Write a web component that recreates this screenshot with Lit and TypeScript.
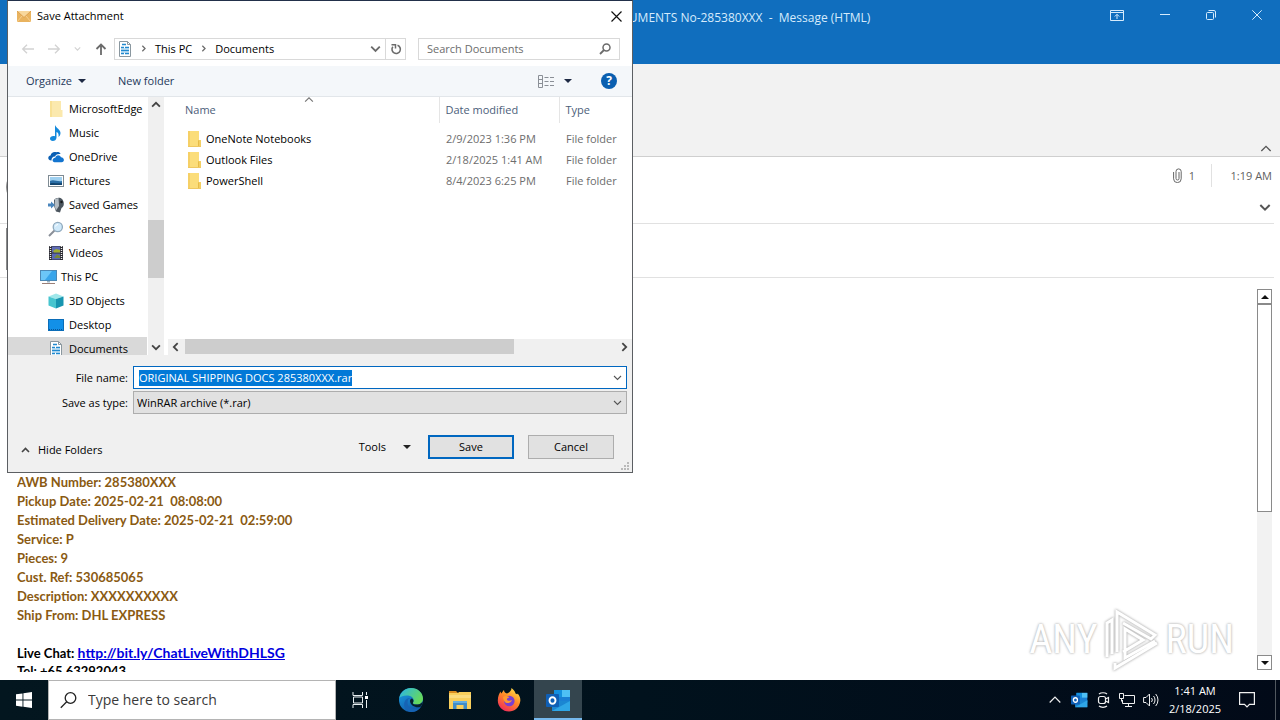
import { LitElement, html, svg, css, type TemplateResult } from "lit";
import { customElement, query } from "lit/decorators.js";
import { classMap } from "lit/directives/class-map.js";

/* ---------- icons ---------- */

const icon = (w: number, h: number, body: unknown, box = `0 0 ${w} ${h}`) =>
  html`<svg width=${w} height=${h} viewBox=${box} fill="none" aria-hidden="true">${body}</svg>`;

const chevron = (dir: "up" | "down" | "left" | "right", color = "#444", size = 8, stroke = 1.6) => {
  const d = {
    up: "M1 6 L4.5 2.5 L8 6",
    down: "M1 3 L4.5 6.5 L8 3",
    left: "M6 1 L2.5 4.5 L6 8",
    right: "M3 1 L6.5 4.5 L3 8",
  }[dir];
  return icon(size, size, svg`<path d=${d} stroke=${color} stroke-width=${stroke}/>`, "0 0 9 9");
};

const triangle = (color = "#1e2a44") => icon(8, 4, svg`<path d="M0 0H8L4 4Z" fill=${color}/>`);

const pageLines = svg`
  <path d="M2.500 .5H10.500L13.500 3.500V15.500H2.500Z" fill="#fff" stroke="#8a979f"/>
  <path d="M10.500 .5V3.500H13.500" stroke="#8a979f"/>
  <path d="M5 3.500H9M4 6.500H7M8 6.500H12M4 9.500H12M4 12.500H7M8 12.500H12" stroke="#2089cf" stroke-width="1.500"/>
  <path d="M4 8H12M4 11H12" stroke="#8cc6ea"/>`;

const art: Record<string, TemplateResult> = {
  mail: icon(14, 11, svg`<rect width="14" height="11" fill="#e9b35f"/><path d="M0 0H14L7 6.500Z" fill="#f8d79c"/><path d="M0 0L7 6.500L14 0" stroke="#dca050"/><path d="M0 11L5 5M14 11L9 5" stroke="#f6cf91"/>`),
  document: icon(16, 16, pageLines),
  folderPale: icon(16, 16, svg`<path d="M2 0H13V9H14.500V16H2Z" fill="#fbe9ae"/><path d="M2 0H4V16H2Z" fill="#f8e196"/>`),
  folder: icon(16, 16, svg`<path d="M2 0H13V16H2Z" fill="#fbdd7a"/><path d="M2 0H4V16H2Z" fill="#f6d066"/><path d="M12 9H15V16H12Z" fill="#f3cf63"/><path d="M12.500 9.500V15.500" stroke="#e6bb48"/><path d="M2 15.500H15" stroke="#efc860"/>`),
  music: icon(16, 16, svg`<path d="M7 0C8 3 12.5 4.500 12.5 8C12.500 10 11.500 11 10.500 12C11 9 10 7.500 8.500 7V12.500C8.500 15 6.500 16 4.800 16C3 16 2 15 2 13.500C2 11.500 4.500 10.500 7 11.200Z" fill="#1489dc"/>`),
  onedrive: icon(16, 16, svg`<path d="M3.500 11.500C1 11.500 0 10 .3 8.500C.6 7 2 6.500 2.600 6.500C3 3.500 6 2.300 8.300 3.300C9.500 2.600 12 3 12.500 5C9 4.500 7.500 6 7 7.500C4.500 7.500 3.300 9.500 3.500 11.500Z" fill="#0a5fb4"/><path d="M6.500 13.300C4 13.300 3.600 9.300 7.300 8.800C7.800 5.500 12 5.200 13 8.300C16.500 8.300 17 13.300 13.600 13.300Z" fill="#1374cf"/>`),
  pictures: icon(16, 16, svg`<rect x=".5" y="2.500" width="15" height="11" fill="#fff" stroke="#7f8b93"/><rect x="2" y="4" width="12" height="8" fill="#9fd0f0"/><path d="M2 8C6 6 9 9 14 8V12H2Z" fill="#2a6ea6"/><path d="M2 10.500C6 9 9 11 14 10V12H2Z" fill="#13456f"/>`),
  games: icon(16, 16, svg`<path d="M6 3C8 .5 12 0 14 2C16.500 4.500 16.500 10 13.500 11L12 15.500L8 14.500L6 9Z" fill="#4b555e"/><path d="M7 2L10.500 1L11 9L8 13.500L6.500 9Z" fill="#b4bdc4"/><path d="M0 6.500H3V4.500L7 8L3 11.500V9.500H0Z" fill="#4a86bd"/><circle cx="13.500" cy="5" r="1.200" fill="#16191c"/>`),
  search: icon(16, 16, svg`<path d="M6.500 9.500L1 15" stroke="#8a8f98" stroke-width="2"/><circle cx="9.800" cy="6" r="4.600" fill="#cfe9fa" stroke="#8fa9bd" stroke-width="1.300"/><path d="M7.500 5.500A2.500 2.500 0 0 1 10 3.500" stroke="#fff"/>`),
  videos: icon(16, 16, svg`<rect x="1" y="1" width="14" height="14" fill="#2c2c34"/><path d="M2.500 1V15M13.500 1V15" stroke="#eee" stroke-width="1.400" stroke-dasharray="1 1"/><rect x="4" y="1.500" width="8" height="6" fill="#5f6cb5"/><rect x="4" y="8.500" width="8" height="6" fill="#5a68b8"/><path d="M5 6L8 4L12 5V7.500H6Z" fill="#9fae2f"/><path d="M6 13L9 9.500L12 11V13Z" fill="#77893a"/>`),
  pc: icon(17, 16, svg`<rect x=".5" y="1.500" width="16" height="10" fill="#39a5ea" stroke="#4c88b5"/><path d="M1 2H12L5 11H1Z" fill="#6cc6f7"/><path d="M7 12H10V13.500H7Z" fill="#9db3c2"/><path d="M2 14.500H15" stroke="#9a7f78"/>`),
  cube: icon(16, 16, svg`<path d="M8 .5L15.500 3.500L8 6L.5 3.500Z" fill="#9fe7ea"/><path d="M.5 3.500L8 6V15.500L.5 12.500Z" fill="#47c5cf"/><path d="M8 6L15.500 3.500V12.500L8 15.500Z" fill="#1795b0"/>`),
  desktop: icon(16, 16, svg`<rect x=".5" y="2.500" width="15" height="11" fill="#1290e8" stroke="#0b6db8"/><path d="M1 12.500H15" stroke="#0a5597" stroke-dasharray="1 1"/>`),
  back: icon(13, 10, svg`<path d="M1.500 5H13M6 .7L1.700 5L6 9.300" stroke="#d2d2d2" stroke-width="1.300"/>`),
  forward: icon(13, 10, svg`<path d="M0 5H11.500M7 .7L11.300 5L7 9.300" stroke="#d2d2d2" stroke-width="1.300"/>`),
  up: icon(12, 12, svg`<path d="M6 1.500V12M1.500 6L6 1.500L10.500 6" stroke="#6b6b6b" stroke-width="1.800"/>`),
  refresh: icon(12, 12, svg`<path d="M7.500 2.300A4.200 4.200 0 1 1 2.800 3.800" stroke="#6b6b6b" stroke-width="1.600"/><path d="M1.500 1.700H5.500V5.500" stroke="#6b6b6b" stroke-width="1.500"/>`),
  glass: icon(12, 12, svg`<circle cx="7.500" cy="4.500" r="3.500" stroke="#6b6b6b" stroke-width="1.500"/><path d="M5 7L1 11" stroke="#6b6b6b" stroke-width="1.800"/>`),
  views: icon(17, 13, svg`<path d="M.5 .5H4.500V12.500H.5ZM.5 4.500H4.500M.5 8.500H4.500" stroke="#8a8f96"/><path d="M6.500 2.500H10.500M12 2.500H16M6.500 6.500H10.500M12 6.500H16M6.500 10.500H10.500M12 10.500H16" stroke="#8a8f96"/>`),
  close: icon(11, 11, svg`<path d="M.5 .5L10.500 10.500M10.500 .5L.5 10.500" stroke="#111" stroke-width="1.200"/>`),
  grip: icon(9, 9, svg`<path d="M6 1H8M3 4H5M6 4H8M0 7H2M3 7H5M6 7H8" stroke="#b9b9b9" stroke-width="2"/>`),
  winRibbon: icon(14, 11, svg`<path d="M.5 .5H13.500V10.500H.5ZM.5 2.500H13.500M7 9V4.500M4.800 6.500L7 4.300L9.200 6.500" stroke="#d6ebfc"/>`),
  winMin: icon(10, 10, svg`<path d="M0 4.500H10" stroke="#d6ebfc"/>`),
  winMax: icon(10, 10, svg`<rect x=".5" y="2.500" width="7" height="7" rx="1" stroke="#d6ebfc"/><path d="M2.500 .5H8A1.500 1.500 0 0 1 9.500 2V7.500" stroke="#d6ebfc"/>`),
  winClose: icon(10, 10, svg`<path d="M.3 .3L9.700 9.700M9.700 .3L.3 9.700" stroke="#d6ebfc"/>`),
  clip: icon(9, 15, svg`<path d="M6 4V10.500A1.500 1.500 0 0 1 3 10.500V3.500" stroke="#666"/><path d="M.6 4V10.800A3.800 3.800 0 0 0 8.200 10.800V3.500A2.600 2.600 0 0 0 3 3.500" stroke="#666"/>`),
  windows: icon(16, 16, svg`<path d="M0 2.300L6.500 1.400V7.600H0ZM7.400 1.300L16 0V7.600H7.400ZM0 8.500H6.500V14.700L0 13.800ZM7.400 8.500H16V16L7.400 14.800Z" fill="#fff"/>`),
  taskSearch: icon(17, 17, svg`<circle cx="10.500" cy="6" r="5.300" stroke="#222" stroke-width="1.300"/><path d="M6.700 9.800L.8 15.700" stroke="#222" stroke-width="1.300"/>`),
  taskView: icon(17, 16, svg`<path d="M1 0V3.500H10.500V0M1 16V12.500H10.500V16M1.500 5H10.500V11H1.500Z" stroke="#e8eef0"/><path d="M14.500 0V3M14.500 8V16" stroke="#e8eef0"/><rect x="13" y="4" width="3" height="3" fill="#fff"/>`),
  edge: icon(24, 24, svg`
    <defs>
      <linearGradient id="e1" x1="0" y1="0" x2="1" y2=".5"><stop offset="0" stop-color="#29b5ea"/><stop offset="1" stop-color="#66d95c"/></linearGradient>
      <linearGradient id="e2" x1="0" y1="0" x2=".6" y2="1"><stop offset="0" stop-color="#1aa3e6"/><stop offset="1" stop-color="#1158a8"/></linearGradient>
    </defs>
    <circle cx="12" cy="12" r="12" fill="url(#e2)"/>
    <path d="M.3 10C1.500 4 6.500 0 12 0C19 0 24 5 24 10.500C24 14.500 21 16.500 18 16.500C15 16.500 13.500 15.500 14 14.500C15.500 12.500 14.500 9 11 8C7 6.800 2 8 .3 10Z" fill="url(#e1)"/>
    <path d="M9 12C7 18 12 21.500 17 20.800C19 20.600 21 19.700 22 18.700C20 22 16 24 12.500 24C7 24 4 18.500 5.500 14C6.500 11 9.500 9.500 11.500 10C10 10.500 9.300 11 9 12Z" fill="#1663b3"/>
    <path d="M14 14.500C13 16 15.500 16.800 18.500 16.500C21 16.300 23 15 23.700 13.500C23.500 16.500 22.500 18 21 19C17 20 11.500 18 11 13C11 11.500 12 10.500 13 10.500C14.800 11.500 14.800 13.300 14 14.500Z" fill="#06212d"/>`),
  explorer: icon(22, 18, svg`<path d="M0 0H7L9 2H0Z" fill="#d98c1f"/><path d="M0 2H9L10 1H22V18H0Z" fill="#f8cf5c"/><path d="M0 4H22V7H0Z" fill="#fbdc7f"/><path d="M4 18V10H18V18H14.500V14H7.500V18Z" fill="#3f8dc9"/><path d="M4 10H18V12H4Z" fill="#62aee2"/>`),
  firefox: icon(24, 24, svg`
    <defs><linearGradient id="f1" x1=".8" y1="0" x2=".2" y2="1"><stop offset="0" stop-color="#ffe14a"/><stop offset=".45" stop-color="#ff8a26"/><stop offset="1" stop-color="#f0245e"/></linearGradient></defs>
    <path d="M14.500 0C17 2 18 3.500 18.500 5.500C20 6 20.500 7 20.700 5.500C23 8 23.500 11 23.300 13C22.500 19.500 17.500 23.500 12 23.500C5.500 23.500 .8 18.500 .8 12.500C.8 8 2.500 5 3.500 3.500C3.800 4.500 4 5 4.500 5.500C5 4 6.500 2.500 7 2C7 4 8 5 10 5.500C12 4.500 14.500 3 14.500 0Z" fill="url(#f1)"/>
    <circle cx="12.300" cy="13" r="5.300" fill="#7a3fd0"/>
    <path d="M6 9C8 7.500 11 8 12.500 9.500C11 9.500 9.500 10.500 10 12C11 13.500 14 12.500 15 12C14 15.500 9.500 16 7.500 13.500C6.500 12 6 10.500 6 9Z" fill="#ff9a2e"/>`),
  outlook: icon(25, 23, svg`<rect x="8" y="1" width="16" height="14" fill="#1a7fd4"/><rect x="16" y="1" width="8" height="7" fill="#4fc0f5"/><rect x="8" y="1" width="8" height="7" fill="#1490df"/><path d="M6 12H24V22H6Z" fill="#1b86d2"/><path d="M6 22L24 12V22Z" fill="#2fa6e6"/><rect y="5" width="13" height="13" rx="1" fill="#0f5fb5"/><ellipse cx="6.500" cy="11.500" rx="3" ry="3.300" stroke="#fff" stroke-width="1.900"/>`),
  trayUp: icon(12, 8, svg`<path d="M.7 6.500L6 1.200L11.300 6.500" stroke="#f0f0f0" stroke-width="1.200"/>`),
  meet: icon(13, 16, svg`<rect x="1.500" y="4.500" width="7" height="7" rx="2" stroke="#f0f0f0" stroke-width="1.200"/><path d="M8.500 7L11.500 5.500V10.500L8.500 9M2 2C4 .3 8 .3 10 2M2 14C4 15.700 8 15.700 10 14" stroke="#f0f0f0" stroke-width="1.200"/>`),
  network: icon(16, 14, svg`<path d="M5.500 2.500H15.500V10.500H3.500V7M9.500 10.500V13M6 13.500H13" stroke="#f0f0f0"/><path d="M.5 .5H4.500V5.500H.5ZM2.500 5.500V8.500" stroke="#f0f0f0"/>`),
  volume: icon(17, 14, svg`<path d="M.6 4.500H3L6.500 1V13L3 9.500H.6Z" stroke="#f0f0f0"/><path d="M8.500 5A3 3 0 0 1 8.500 9M10.500 3A6 6 0 0 1 10.500 11M12.700 1A9 9 0 0 1 12.700 13" stroke="#f0f0f0"/>`),
  notify: icon(16, 17, svg`<path d="M.6 .6H15.400V12.400H10.500L8 15L5.500 12.400H.6Z" stroke="#f0f0f0" stroke-width="1.200"/>`),
};

/* ---------- data ---------- */

const tree = [
  { name: "MicrosoftEdge", art: "folderPale" },
  { name: "Music", art: "music" },
  { name: "OneDrive", art: "onedrive" },
  { name: "Pictures", art: "pictures" },
  { name: "Saved Games", art: "games" },
  { name: "Searches", art: "search" },
  { name: "Videos", art: "videos" },
  { name: "This PC", art: "pc", root: true },
  { name: "3D Objects", art: "cube" },
  { name: "Desktop", art: "desktop" },
  { name: "Documents", art: "document", selected: true },
];

const files = [
  { name: "OneNote Notebooks", date: "2/9/2023 1:36 PM", type: "File folder" },
  { name: "Outlook Files", date: "2/18/2025 1:41 AM", type: "File folder" },
  { name: "PowerShell", date: "8/4/2023 6:25 PM", type: "File folder" },
];

const shipment = [
  "AWB Number: 285380XXX",
  "Pickup Date: 2025-02-21  08:08:00",
  "Estimated Delivery Date: 2025-02-21  02:59:00",
  "Service: P",
  "Pieces: 9",
  "Cust. Ref: 530685065",
  "Description: XXXXXXXXXX",
  "Ship From: DHL EXPRESS",
];

const reset = css`
  * { box-sizing: border-box; }
  svg { display: block; flex: none; }
  button, input, select { font: inherit; color: inherit; margin: 0; }
  button { background: none; border: 0; padding: 0; display: flex; align-items: center; justify-content: center; }
  ul { list-style: none; margin: 0; padding: 0; }
`;

/* ---------- save dialog ---------- */

@customElement("save-dialog")
export class SaveDialog extends LitElement {
  @query("#file-name") private fileName!: HTMLInputElement;

  static styles = [reset, css`
    :host {
      display: flex; flex-direction: column;
      background: #fff; color: #000;
      border: 1px solid #5c5f63; border-top-color: #22304a;
      font: 11px/16px "Open Sans", "Noto Sans", sans-serif;
    }
    .titlebar { display: flex; align-items: center; height: 30px; padding: 0 10px 0 9px; gap: 6px; }
    .titlebar h1 { flex: 1; margin: 0; font: inherit; }
    .nav { display: flex; align-items: center; height: 35px; padding: 0 12px; }
    .arrows { display: flex; align-items: center; justify-content: space-between; width: 94px; padding: 0 7px 0 1px; }
    .address { display: flex; align-items: center; flex: 1; height: 22px; border: 1px solid #d9d9d9; padding-left: 2px; }
    .crumbs { display: flex; align-items: center; flex: 1; gap: 8px; padding-left: 7px; }
    .address .drop { width: 20px; height: 20px; }
    .address .refresh { width: 20px; height: 20px; border-left: 1px solid #d9d9d9; }
    .search { display: flex; align-items: center; width: 202px; height: 22px; margin-left: 12px; padding: 0 8px; border: 1px solid #d9d9d9; }
    .search input { flex: 1; min-width: 0; border: 0; padding: 0; outline: 0; background: none; }
    .search input::placeholder { color: #6d6d6d; opacity: 1; }
    .toolbar { display: flex; align-items: center; height: 31px; padding: 0 15px 0 18px; border-bottom: 1px solid #e2e6ea; background: #f4f7fa; color: #1e395b; }
    .toolbar button { gap: 6px; }
    .toolbar .new { margin-left: 32px; }
    .toolbar .views { margin-left: auto; gap: 9px; }
    .toolbar .help { width: 16px; height: 16px; margin-left: 29px; border-radius: 50%; background: #0a5fb0; color: #fff; font-weight: 700; font-size: 12px; }
    .panes { display: flex; height: 258px; overflow: hidden; }
    .tree { width: 139px; overflow: hidden; }
    .tree li { display: flex; align-items: center; gap: 5px; height: 24px; padding-left: 40px; white-space: nowrap; }
    .tree li.root { padding-left: 32px; gap: 4px; }
    .tree li.selected { background: #d9d9d9; }
    .vbar { display: flex; flex-direction: column; width: 16px; margin-left: 1px; background: #f0f0f0; }
    .vbar button, .hbar button { flex: none; width: 16px; height: 16px; }
    .vbar .thumb { margin-top: 107px; height: 58px; background: #cdcdcd; }
    .vbar .end { margin-top: auto; }
    .list { display: flex; flex-direction: column; flex: 1; min-width: 0; }
    .scroller { position: relative; flex: 1; overflow: hidden; }
    table { width: 100%; border-collapse: collapse; table-layout: fixed; }
    th { height: 26px; padding: 0 0 0 6px; text-align: left; font-weight: 400; color: #4c607a; border-left: 1px solid #e5e5e5; }
    th:first-child { border-left: 0; padding-left: 21px; }
    .c-name { width: 275px; }
    .c-date { width: 120px; }
    tbody::before { content: ""; display: block; height: 5px; }
    td { height: 21px; padding: 0 0 0 7px; color: #6d6d6d; white-space: nowrap; overflow: hidden; }
    td:first-child { padding-left: 22px; color: #000; }
    .cell { display: flex; align-items: center; gap: 4px; }
    .sort { position: absolute; left: 140px; top: -2px; }
    .hbar { display: flex; height: 16px; margin-left: 4px; background: #f0f0f0; }
    .hbar .thumb { width: 71%; height: 15px; background: #cdcdcd; margin-left: 1px; }
    .hbar .end { margin-left: auto; }
    .form { background: #f0f0f0; padding: 11px 5px 0 8px; }
    .fields { display: grid; grid-template-columns: 112px 1fr; column-gap: 5px; row-gap: 2px; align-items: center; }
    .fields label { text-align: right; }
    .combo { position: relative; display: flex; align-items: center; height: 23px; background: #fff; border: 1px solid #0067c0; padding: 0 4px 0 5px; }
    .combo.type { background: #e1e1e1; border-color: #adadad; padding: 0; }
    .combo input { flex: 1; min-width: 0; border: 0; padding: 0; outline: 0; background: none; line-height: 16px; caret-color: transparent; }
    .combo input::selection { background: rgba(0, 120, 215, 0.996); color: #fff; }
    .combo select { appearance: none; width: 100%; height: 100%; border: 0; outline: 0; background: none; padding: 0 3px; }
    .combo .mark { position: absolute; right: 4px; pointer-events: none; }
    .actions { display: flex; align-items: center; height: 24px; margin-top: 21px; padding-right: 13px; }
    .hide { gap: 8px; padding-left: 5px; margin-top: 6px; }
    .tools { gap: 17px; margin-left: auto; margin-right: 17px; }
    .push { width: 86px; height: 24px; border: 1px solid #adadad; background: #e1e1e1; }
    .push.default { border: 2px solid #0067c0; margin-right: 14px; }
    .foot { display: flex; justify-content: flex-end; height: 13px; align-items: flex-end; padding-bottom: 1px; margin-right: -3px; }
  `];

  firstUpdated() {
    this.fileName.focus();
    this.fileName.select();
  }

  render() {
    return html`
      <div class="titlebar">${art.mail}<h1>Save Attachment</h1><button aria-label="Close">${art.close}</button></div>
      <div class="nav">
        <div class="arrows">
          <button aria-label="Back">${art.back}</button>
          <button aria-label="Forward">${art.forward}</button>
          <button aria-label="Recent locations">${chevron("down", "#d2d2d2", 7, 1.5)}</button>
          <button aria-label="Up">${art.up}</button>
        </div>
        <div class="address">
          ${art.document}
          <div class="crumbs">${chevron("right", "#6b6b6b", 7)}<span>This PC</span>${chevron("right", "#6b6b6b", 7)}<span>Documents</span></div>
          <button class="drop" aria-label="Previous locations">${chevron("down", "#6b6b6b", 11, 1.5)}</button>
          <button class="refresh" aria-label="Refresh">${art.refresh}</button>
        </div>
        <div class="search"><input type="text" placeholder="Search Documents" aria-label="Search Documents">${art.glass}</div>
      </div>
      <div class="toolbar">
        <button>Organize ${triangle()}</button>
        <button class="new">New folder</button>
        <button class="views" aria-label="Change your view">${art.views}${triangle()}</button>
        <button class="help" aria-label="Get help">?</button>
      </div>
      <div class="panes">
        <ul class="tree">
          ${tree.map((n) => html`<li class=${classMap({ root: !!n.root, selected: !!n.selected })}>${art[n.art]}<span>${n.name}</span></li>`)}
        </ul>
        <div class="vbar">
          <button aria-label="Scroll up">${chevron("up", "#444", 10)}</button>
          <div class="thumb"></div>
          <button class="end" aria-label="Scroll down">${chevron("down", "#444", 10)}</button>
        </div>
        <div class="list">
          <div class="scroller">
            <span class="sort">${chevron("up", "#777", 10, 1)}</span>
            <table>
              <colgroup><col class="c-name"><col class="c-date"><col></colgroup>
              <thead><tr><th>Name</th><th>Date modified</th><th>Type</th></tr></thead>
              <tbody>
                ${files.map((f) => html`<tr><td><div class="cell">${art.folder}${f.name}</div></td><td>${f.date}</td><td>${f.type}</td></tr>`)}
              </tbody>
            </table>
          </div>
          <div class="hbar">
            <button aria-label="Scroll left">${chevron("left", "#444", 10)}</button>
            <div class="thumb"></div>
            <button class="end" aria-label="Scroll right">${chevron("right", "#444", 10)}</button>
          </div>
        </div>
      </div>
      <div class="form">
        <div class="fields">
          <label for="file-name">File name:</label>
          <div class="combo"><input id="file-name" type="text" value="ORIGINAL SHIPPING DOCS 285380XXX.rar" spellcheck="false">${chevron("down", "#555", 9, 1.1)}</div>
          <label for="file-type">Save as type:</label>
          <div class="combo type"><select id="file-type"><option>WinRAR archive (*.rar)</option></select><span class="mark">${chevron("down", "#555", 9, 1.1)}</span></div>
        </div>
        <div class="actions">
          <button class="hide">${chevron("up", "#444", 9)}Hide Folders</button>
          <button class="tools">Tools ${triangle("#222")}</button>
          <button class="push default">Save</button>
          <button class="push">Cancel</button>
        </div>
        <div class="foot">${art.grip}</div>
      </div>
    `;
  }
}

/* ---------- Outlook message window ---------- */

@customElement("message-window")
export class MessageWindow extends LitElement {
  static styles = [reset, css`
    :host { display: flex; flex-direction: column; background: #fff; font: 11px/16px "Open Sans", "Noto Sans", sans-serif; }
    .titlebar { display: flex; height: 64px; background: #106ebe; color: #d6ebfc; }
    .titlebar h2 { flex: 1; margin: 0; padding-top: 10px; font: inherit; font-size: 12px; text-align: right; white-space: pre; }
    .controls { display: flex; align-items: center; justify-content: flex-end; gap: 36px; width: 32%; height: 30px; padding-right: 18px; }
    .ribbon { display: flex; align-items: flex-end; justify-content: flex-end; height: 93px; padding: 0 8px 1px; background: #f2f2f2; border-bottom: 1px solid #cfcfcf; }
    .head { display: flex; height: 67px; margin-right: 6px; padding-left: 6px; border-bottom: 1px solid #e1e1e1; }
    .avatar { width: 40px; height: 40px; margin-top: 10px; border: 1px solid #8a8a8a; border-radius: 50%; }
    .meta { flex: 1; display: flex; flex-direction: column; align-items: flex-end; gap: 14px; padding-top: 7px; color: #5f5f5f; }
    .info { display: flex; align-items: center; height: 23px; }
    .count { display: flex; align-items: center; gap: 7px; height: 23px; padding-right: 16px; border-right: 1px solid #e1e1e1; }
    .time { width: 60px; text-align: right; margin-right: 2px; }
    .meta button { margin-right: 3px; }
    .files { height: 54px; margin-right: 6px; padding: 4px 6px; border-bottom: 1px solid #e1e1e1; }
    .attachment { width: 200px; height: 42px; border: 1px solid #8a8a8a; }
    .reading { display: flex; flex: 1; min-height: 0; padding: 11px 8px 8px 17px; }
    .mail { flex: 1; overflow: hidden; padding-top: 184px; color: #8a5a12; font: 700 13px/19px Lato, "Open Sans", sans-serif; white-space: pre; }
    .mail p { margin: 0; height: 19px; }
    .mail .dark { color: #000; }
    .mail a { color: #0000e0; font-size: 14px; }
    .mail .first { margin-top: 18px; }
    .bar { display: flex; flex-direction: column; width: 15px; margin-bottom: 2px; background: #f2f2f2; }
    .bar button { width: 15px; height: 15px; border: 1px solid #8a8a8a; background: #fff; }
    .bar .thumb { height: 208px; border: 1px solid #8a8a8a; background: #fff; }
    .bar .end { margin-top: auto; }
  `];

  render() {
    return html`
      <header class="titlebar">
        <h2>DOCUMENTS No-285380XXX  -  Message (HTML)</h2>
        <div class="controls">
          <button aria-label="Ribbon display options">${art.winRibbon}</button>
          <button aria-label="Minimize">${art.winMin}</button>
          <button aria-label="Restore">${art.winMax}</button>
          <button aria-label="Close">${art.winClose}</button>
        </div>
      </header>
      <div class="ribbon"><button aria-label="Collapse the ribbon">${chevron("up", "#555", 12, 1)}</button></div>
      <div class="head">
        <div class="avatar"></div>
        <div class="meta">
          <div class="info"><span class="count">${art.clip}1</span><span class="time">1:19 AM</span></div>
          <button aria-label="Expand header">${chevron("down", "#555", 12, 1.5)}</button>
        </div>
      </div>
      <div class="files"><div class="attachment"></div></div>
      <div class="reading">
        <div class="mail">${shipment.map((line) => html`<p>${line}</p>`)}<p class="dark first">Live Chat: <a href="http://bit.ly/ChatLiveWithDHLSG">http://bit.ly/ChatLiveWithDHLSG</a></p><p class="dark">Tel: +65 63292043</p></div>
        <div class="bar">
          <button aria-label="Scroll up">${icon(8, 4, svg`<path d="M4 0L8 4H0Z" fill="#111"/>`)}</button>
          <div class="thumb"></div>
          <button class="end" aria-label="Scroll down">${triangle("#111")}</button>
        </div>
      </div>
    `;
  }
}

/* ---------- taskbar ---------- */

@customElement("task-bar")
export class TaskBar extends LitElement {
  static styles = [reset, css`
    :host { display: flex; height: 40px; background: linear-gradient(90deg, #03161f, #01121d 50%, #020a18); color: #fff; font: 11px/18px "Open Sans", "Noto Sans", sans-serif; }
    .cell { width: 49px; height: 40px; }
    .view { margin-right: 1px; }
    .start { width: 48px; }
    .search { display: flex; align-items: center; gap: 11px; width: 288px; height: 40px; padding-left: 11px; background: #fff; border: 1px solid #b4b4b4; color: #333; }
    .search input { flex: 1; min-width: 0; border: 0; padding: 0; outline: 0; background: none; font-size: 14px; line-height: 20px; }
    .search input::placeholder { color: #3a3a3a; opacity: 1; }
    .active { width: 48px; margin-left: 1px; background: #34454e; border-bottom: 2px solid #76b9ed; padding-top: 2px; }
    .tray { display: flex; align-items: center; margin-left: auto; }
    .tray .t { width: 24px; height: 40px; }
    .clock { width: 64px; text-align: center; white-space: nowrap; }
    .note { width: 40px; height: 40px; }
    .peek { width: 5px; height: 40px; margin-left: 8px; border-left: 1px solid #51585f; }
    .small svg { width: 17px; height: 16px; }
  `];

  render() {
    return html`
      <button class="start" aria-label="Start">${art.windows}</button>
      <div class="search">${art.taskSearch}<input type="text" placeholder="Type here to search" aria-label="Type here to search"></div>
      <button class="cell view" aria-label="Task View">${art.taskView}</button>
      <button class="cell" aria-label="Microsoft Edge">${art.edge}</button>
      <button class="cell" aria-label="File Explorer">${art.explorer}</button>
      <button class="cell" aria-label="Firefox">${art.firefox}</button>
      <button class="active" aria-label="Outlook">${art.outlook}</button>
      <div class="tray">
        <button class="t" aria-label="Show hidden icons">${art.trayUp}</button>
        <button class="t small" aria-label="Outlook">${art.outlook}</button>
        <button class="t" aria-label="Meet Now">${art.meet}</button>
        <button class="t" aria-label="Network">${art.network}</button>
        <button class="t" aria-label="Volume">${art.volume}</button>
        <div class="clock">1:41 AM<br>2/18/2025</div>
        <button class="note" aria-label="Notifications">${art.notify}</button>
        <div class="peek"></div>
      </div>
    `;
  }
}

/* ---------- desktop ---------- */

@customElement("app-root")
export class AppRoot extends LitElement {
  static styles = [reset, css`
    :host { position: relative; display: flex; flex-direction: column; height: 100vh; overflow: hidden; }
    message-window { flex: 1; min-height: 0; }
    save-dialog { position: absolute; left: 7px; top: 0; width: 626px; max-width: calc(100% - 14px); }
    .watermark { position: absolute; right: 46px; bottom: 48px; display: flex; align-items: center; color: #fff; font: 400 40px/40px "Roboto Condensed", "Liberation Sans Narrow", Roboto, sans-serif; text-shadow: 0 0 3px #b4b4b4, 0 0 2px #c8c8c8; pointer-events: none; }
    .watermark svg { margin: 0 5px; filter: drop-shadow(0 0 1px #b8b8b8) drop-shadow(0 0 1px #d0d0d0); }
  `];

  render() {
    return html`
      <message-window></message-window>
      <save-dialog role="dialog" aria-label="Save Attachment"></save-dialog>
      <div class="watermark">
        <span>ANY</span>
        ${icon(58, 64, svg`<path d="M9 46V12L4 15V49M14 44V4L52 27L48 31L20 15" stroke="#fff" stroke-width="3"/><path d="M20 44L40 32L22 21V50L52 33M12 55V60L54 35" stroke="#fff" stroke-width="3"/>`)}
        <span>RUN</span>
      </div>
      <task-bar></task-bar>
    `;
  }
}
